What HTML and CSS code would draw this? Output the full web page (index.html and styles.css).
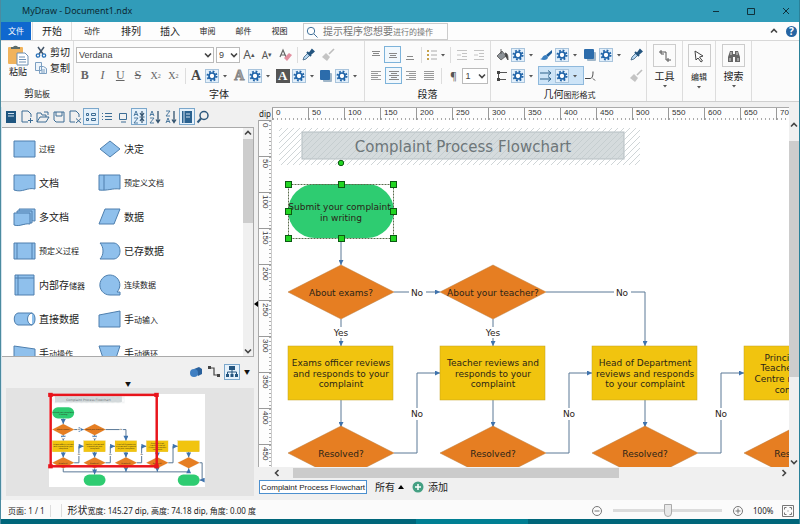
FILE: index.html
```html
<!DOCTYPE html>
<html lang="zh-CN">
<head>
    <meta charset="UTF-8">
    <meta name="viewport" content="width=device-width, initial-scale=1.0">
    <title>MyDraw - Document1.ndx</title>
    <link rel="stylesheet" href="styles.css">
</head>
<body>
    <!-- shared icons -->
    <svg class="sprite" aria-hidden="true">
        <symbol id="i-gear" viewBox="0 0 14 14">
            <rect x=".5" y=".5" width="13" height="13" fill="#e3f0fb" stroke="#a9c4dc"/>
            <circle cx="7" cy="7" r="4.5" fill="none" stroke="#1f63a8" stroke-width="2" stroke-dasharray="1.77 1.77"/>
            <circle cx="7" cy="7" r="3" fill="#fff" stroke="#1f63a8" stroke-width="1.7"/>
        </symbol>
        <symbol id="i-drop" viewBox="0 0 8 14"><path d="M2 6h4l-2 2.5z" fill="#555"/></symbol>
        <symbol id="i-layers" viewBox="0 0 14 14">
            <rect x="4" y="4" width="9" height="9" rx="1" fill="#9fb6c9"/>
            <rect x="1" y="1" width="10" height="10" rx="1" fill="#2c6cab"/>
        </symbol>
        <symbol id="i-dropper" viewBox="0 0 14 14">
            <path d="M2 12l1-3 4-4 2 2-4 4z" fill="#b8d8f2" stroke="#3b5f80" stroke-width=".8"/>
            <path d="M6 4l4 4M8 6l3-4 1.5 1.5L9 6.500z" stroke="#24557f" stroke-width="2" fill="#24557f"/>
        </symbol>
        <symbol id="i-painter" viewBox="0 0 14 14">
            <path d="M13 1L8 6" stroke="#bdbdbd" stroke-width="1.6"/>
            <path d="M5 5l4 4-3 4-5-4z" fill="#c4c4c4"/>
        </symbol>
        <symbol id="i-brush" viewBox="0 0 14 14">
            <path d="M13 2L7 7l2 2 4-4z" fill="#1d5e9c"/>
            <path d="M1 11c3 0 2-4 6-4l2 2c0 3-4 4-8 2z" fill="#3a7fc0"/>
        </symbol>
        <symbol id="i-bucket" viewBox="0 0 14 14">
            <path d="M2 8l5-5 4 5-5 4z" fill="#8c9297" stroke="#555" stroke-width=".8"/>
            <path d="M6 1v5M10 5c3 0 3 4 3 7l-2-3z" stroke="#444" fill="#444" stroke-width=".8"/>
        </symbol>
        <symbol id="i-line" viewBox="0 0 14 14">
            <path d="M3 3.500h9M3 10.500h8M3.500 3v8" stroke="#555" fill="none"/>
            <path d="M2 2h3v3H2zM2 9h3v3H2z" fill="#444"/>
        </symbol>
        <symbol id="i-arrows" viewBox="0 0 14 14">
            <path d="M1 4h10M1 10h10M9 1.500L12 4 9 6.500M9 7.500L12 10l-3 2.500" stroke="#2d6189" fill="none"/>
        </symbol>
        <symbol id="i-corner" viewBox="0 0 14 14">
            <path d="M2 9.500h5c2 0 3-2 3-7M10 9.500l2 2" stroke="#444" fill="none"/>
        </symbol>
        <symbol id="i-top" viewBox="0 0 14 14"><path d="M3 3.500h8M4 5.500h6M3 7.500h8" stroke="#888"/></symbol>
        <symbol id="i-mid" viewBox="0 0 14 14"><path d="M3 5.500h8M4 7.500h6M3 9.500h8" stroke="#888"/></symbol>
        <symbol id="i-bot" viewBox="0 0 14 14"><path d="M4 8.500h6M3 11.500h8" stroke="#888"/></symbol>
        <symbol id="i-left" viewBox="0 0 14 14"><path d="M2 2.500h10M2 4.500h7M2 6.500h10M2 8.500h7M2 10.500h10" stroke="#999"/></symbol>
        <symbol id="i-center" viewBox="0 0 14 14"><path d="M2 2.500h10M4 4.500h6M2 6.500h10M4 8.500h6M2 10.500h10" stroke="#888"/></symbol>
        <symbol id="i-right" viewBox="0 0 14 14"><path d="M2 2.500h10M5 4.500h7M2 6.500h10M5 8.500h7M2 10.500h10" stroke="#999"/></symbol>
        <symbol id="i-just" viewBox="0 0 14 14"><path d="M2 2.500h10M2 4.500h10M2 6.500h10M2 8.500h10M2 10.500h10" stroke="#999"/></symbol>
        <symbol id="i-bullets" viewBox="0 0 14 14">
            <path d="M2 3h2M2 7h2M2 11h2" stroke="#c5a14a" stroke-width="2"/>
            <path d="M6 3h6M6 7h6M6 11h6" stroke="#aaa"/>
        </symbol>
        <symbol id="i-indent" viewBox="0 0 14 14"><path d="M2 2.500h10M7 5.500h5M7 8.500h5M2 11.500h10M2 7h4" stroke="#c4c4c4"/></symbol>
        <symbol id="i-up" viewBox="0 0 10 10"><path d="M2 6.500L5 3.500l3 3" stroke="#444" stroke-width="1.600" fill="none"/></symbol>
        <symbol id="i-down" viewBox="0 0 10 10"><path d="M2 3.500L5 6.500l3-3" stroke="#444" stroke-width="1.600" fill="none"/></symbol>
        <symbol id="i-prev" viewBox="0 0 10 10"><path d="M6.500 2L3.500 5l3 3" stroke="#444" stroke-width="1.600" fill="none"/></symbol>
        <symbol id="i-next" viewBox="0 0 10 10"><path d="M3.500 2L6.500 5l-3 3" stroke="#444" stroke-width="1.600" fill="none"/></symbol>
        <symbol id="i-sort" viewBox="0 0 14 14">
            <path d="M2 6l2-5 2 5M2.500 4.500h3M2 8h4l-4 5h4" stroke="#3f6f99" fill="none" stroke-width=".9"/>
            <path d="M10 1v11M8 9.500l2 3 2-3" stroke="#33536f" fill="none" stroke-width="1.300"/>
        </symbol>
        <symbol id="i-sort-both" viewBox="0 0 14 14">
            <path d="M2 6l2-5 2 5M2.500 4.500h3M2 8h4l-4 5h4" stroke="#3f6f99" fill="none" stroke-width=".9"/>
            <path d="M10 1v12M8 3l2 3 2-3M8 11l2-3 2 3M7.500 7h5" stroke="#33536f" fill="none" stroke-width="1.200"/>
        </symbol>
        <symbol id="i-sort-desc" viewBox="0 0 14 14">
            <path d="M2 1h4L2 6h4M2 13l2-5 2 5M2.500 11.500h3" stroke="#3f6f99" fill="none" stroke-width=".9"/>
            <path d="M10 1v11M8 9.500l2 3 2-3" stroke="#33536f" fill="none" stroke-width="1.300"/>
        </symbol>
    </svg>

    <div class="app">
        <header class="titlebar">
            <span class="title">MyDraw - Document1.ndx</span>
            <div class="window-buttons">
                <button aria-label="最小化"><svg viewBox="0 0 10 10"><path d="M2 5.500h6"/></svg></button>
                <button aria-label="最大化"><svg viewBox="0 0 10 10"><path d="M1.500 2.500h7v6h-7z"/></svg></button>
                <button aria-label="关闭"><svg viewBox="0 0 10 10"><path d="M2 2l6 6M8 2L2 8"/></svg></button>
            </div>
        </header>

        <nav class="tabs">
            <button class="file-tab"><small>文件</small></button>
            <button class="tab active">开始</button>
            <button class="tab"><small>动作</small></button>
            <button class="tab">排列</button>
            <button class="tab">插入</button>
            <button class="tab short"><small>审阅</small></button>
            <button class="tab short"><small>邮件</small></button>
            <button class="tab short"><small>视图</small></button>
            <label class="search">
                <svg viewBox="0 0 12 12" aria-label="搜索"><circle cx="5" cy="5" r="3.700"/><path d="M8 8l3.500 3.500"/></svg>
                <span>提示程序您想要<small>进行的操作</small></span>
                <input type="text">
            </label>
            <div class="help">
                <svg class="icon10"><use href="#i-up"/></svg>
                <button class="help-button">?</button>
            </div>
        </nav>

        <section class="ribbon">
            <div class="group clipboard">
                <div class="clip-body">
                    <button class="paste">
                        <svg viewBox="0 0 22 22">
                            <rect x="1" y="3" width="15" height="17" rx="1" fill="#f0b35c"/>
                            <path d="M4 5V3h2a3 3 0 0 1 5 0h2v2z" fill="#5d6c6b"/>
                            <path d="M10 9h8l3 3v9H10z" fill="#fff" stroke="#6d90b4"/>
                            <path d="M12 13h6M12 15.500h7M12 18h7" stroke="#6d90b4"/>
                        </svg>
                        <span class="mid-text">粘贴</span>
                    </button>
                    <div class="clip-list">
                        <button>
                            <svg viewBox="0 0 12 12"><path d="M3 1l5 7M9 1L4 8" stroke="#44566a" stroke-width="1.500"/><circle cx="3" cy="9.500" r="1.700" fill="none" stroke="#2b73b9" stroke-width="1.300"/><circle cx="9" cy="9.500" r="1.700" fill="none" stroke="#2b73b9" stroke-width="1.300"/></svg>
                            剪切
                        </button>
                        <button>
                            <svg viewBox="0 0 12 12"><path d="M.5.5h6v8h-6zM4.500 4.500h4l3 2v5h-7z" fill="#eef5fb" stroke="#7c9fc1"/><path d="M6 8h4M6 10h4" stroke="#7c9fc1"/></svg>
                            复制
                        </button>
                    </div>
                </div>
                <div class="group-name">剪<small>贴板</small></div>
            </div>

            <div class="group font">
                <div class="row">
                    <span class="select font-family"><select aria-label="字体"><option>Verdana</option></select><svg class="icon10"><use href="#i-down"/></svg></span>
                    <span class="select font-size"><select aria-label="字号"><option>9</option></select><svg class="icon10"><use href="#i-down"/></svg></span>
                    <button class="glyph">A<sup>▴</sup></button>
                    <button class="glyph small">A<sup>▾</sup></button>
                    <button class="glyph"><svg class="icon" viewBox="0 0 14 14"><path d="M2 9l3-7 3 7M3 7h4" stroke="#666" fill="none" stroke-width="1.200"/><path d="M6 10l5-5 3 2-5 6z" fill="#e28fa0"/></svg></button>
                    <i class="sep"></i>
                    <button><svg class="icon"><use href="#i-dropper"/></svg></button>
                    <button class="push"><svg class="icon"><use href="#i-painter"/></svg></button>
                </div>
                <div class="row">
                    <button class="letter"><b>B</b></button>
                    <button class="letter"><em>I</em></button>
                    <button class="letter"><u>U</u></button>
                    <button class="letter"><s>S</s></button>
                    <button class="letter script">X<sub>2</sub></button>
                    <button class="letter script">X<sup>2</sup></button>
                    <i class="sep"></i>
                    <button class="combo"><span class="big-a">A</span><svg class="icon"><use href="#i-gear"/></svg><svg class="drop"><use href="#i-drop"/></svg></button>
                    <button class="combo"><span class="big-a hollow">A</span><svg class="icon"><use href="#i-gear"/></svg><svg class="drop"><use href="#i-drop"/></svg></button>
                    <button class="combo"><span class="big-a boxed">A</span><svg class="icon"><use href="#i-gear"/></svg><svg class="drop"><use href="#i-drop"/></svg></button>
                    <button class="combo"><svg class="icon"><use href="#i-layers"/></svg><svg class="icon"><use href="#i-gear"/></svg><svg class="drop"><use href="#i-drop"/></svg></button>
                </div>
                <div class="group-name">字体</div>
            </div>

            <div class="group paragraph">
                <div class="row">
                    <button class="tool"><svg class="icon"><use href="#i-top"/></svg></button>
                    <button class="tool on"><svg class="icon"><use href="#i-mid"/></svg></button>
                    <button class="tool"><svg class="icon"><use href="#i-bot"/></svg></button>
                    <i class="sep"></i>
                    <button><svg class="icon"><use href="#i-bullets"/></svg><svg class="drop"><use href="#i-drop"/></svg></button>
                    <i class="sep"></i>
                    <button class="tool"><svg class="icon"><use href="#i-indent"/></svg></button>
                    <button class="tool"><svg class="icon"><use href="#i-indent"/></svg></button>
                </div>
                <div class="row">
                    <button class="tool"><svg class="icon"><use href="#i-left"/></svg></button>
                    <button class="tool on"><svg class="icon"><use href="#i-center"/></svg></button>
                    <button class="tool"><svg class="icon"><use href="#i-right"/></svg></button>
                    <button class="tool"><svg class="icon"><use href="#i-just"/></svg></button>
                    <i class="sep"></i>
                    <button class="tool pilcrow">¶</button>
                    <span class="select spacing"><select aria-label="行距"><option>1</option></select><svg class="icon10"><use href="#i-down"/></svg></span>
                </div>
                <div class="group-name">段落</div>
            </div>

            <div class="group geometry">
                <div class="row">
                    <button class="combo"><svg class="icon"><use href="#i-bucket"/></svg><svg class="icon"><use href="#i-gear"/></svg><svg class="drop"><use href="#i-drop"/></svg></button>
                    <button class="combo"><svg class="icon"><use href="#i-brush"/></svg><svg class="icon"><use href="#i-gear"/></svg><svg class="drop"><use href="#i-drop"/></svg></button>
                    <button class="combo"><svg class="icon"><use href="#i-layers"/></svg><svg class="icon"><use href="#i-gear"/></svg><svg class="drop"><use href="#i-drop"/></svg></button>
                    <button class="last"><svg class="icon"><use href="#i-dropper"/></svg></button>
                </div>
                <div class="row">
                    <button class="combo"><svg class="icon"><use href="#i-line"/></svg><svg class="icon"><use href="#i-gear"/></svg><svg class="drop"><use href="#i-drop"/></svg></button>
                    <button class="combo on"><svg class="icon"><use href="#i-arrows"/></svg><svg class="icon"><use href="#i-gear"/></svg><svg class="drop"><use href="#i-drop"/></svg></button>
                    <button class="combo"><svg class="icon"><use href="#i-corner"/></svg></button>
                    <button class="last"><svg class="icon"><use href="#i-painter"/></svg></button>
                </div>
                <div class="group-name">几何<small>图形格式</small></div>
            </div>

            <button class="menu-group">
                <span class="frame"><svg viewBox="0 0 14 14"><path d="M1 3h7v8h5M3 1v4M10 9v4M3 5h3" stroke="#555" fill="none"/></svg></span>
                <span>工具</span>
                <svg class="drop"><use href="#i-drop"/></svg>
            </button>
            <button class="menu-group narrow">
                <span class="frame"><svg viewBox="0 0 14 14"><path d="M3 2l8 5-3.500 1 3 4-1.500 1-3-4-2 2z" stroke="#444" fill="#fff"/></svg></span>
                <span><small>编辑</small></span>
                <svg class="drop"><use href="#i-drop"/></svg>
            </button>
            <button class="menu-group">
                <span class="frame"><svg viewBox="0 0 14 14"><path d="M3 2h3v3h2V2h3l2 6v5H8V8H6v5H1V8z" fill="#666"/><path d="M3 9v3M11 9v3M4 3v3M10 3v3" stroke="#ddd"/></svg></span>
                <span>搜索</span>
                <svg class="drop"><use href="#i-drop"/></svg>
            </button>
        </section>

        <main class="workspace">
            <aside class="sidebar">
                <div class="library-tools">
                    <button><svg class="icon" viewBox="0 0 14 14"><path d="M2 1h10v12H2z" fill="#1f5680"/><path d="M4 3.500h6M4 6h6" stroke="#cfe0ee"/></svg></button>
                    <button><svg class="icon line" viewBox="0 0 14 14"><path d="M8 12H2V1h6l3 3v3M10.500 8v5M8 10.500h5"/></svg></button>
                    <button><svg class="icon line" viewBox="0 0 14 14"><path d="M1 12V3h4l1 2h4v2M1 12l3-5h9l-3 5zM8 2h4v3"/></svg></button>
                    <button><svg class="icon line" viewBox="0 0 14 14"><path d="M2 2h10v10H4l-2-2zM4 2v4h6V2"/></svg></button>
                    <button><svg class="icon line" viewBox="0 0 14 14"><path d="M7 12H2V1h6l3 3v3M8 8.500l5 4.500M13 8.500L8 13"/></svg></button>
                    <button class="on"><svg class="icon line" viewBox="0 0 14 14"><path d="M2.500 3.500h2v2h-2zM2.500 8.500h2v2h-2zM7.500 3.500h4v2h-4zM7.500 8.500h4v2h-4z"/></svg></button>
                    <button><svg class="icon line" viewBox="0 0 14 14"><path d="M2 3.500h1M5 3.500h7M2 6.500h1M5 6.500h7M2 9.500h1M5 9.500h7"/></svg></button>
                    <button><svg class="icon line" viewBox="0 0 14 14"><path d="M3.500 3.500h7v6h-7zM5 12h5"/></svg></button>
                    <button class="on"><svg class="icon"><use href="#i-sort-both"/></svg></button>
                    <button><svg class="icon"><use href="#i-sort"/></svg></button>
                    <button><svg class="icon"><use href="#i-sort-desc"/></svg></button>
                    <button class="on"><svg class="icon" viewBox="0 0 14 14"><path d="M2 1h10v12H2z" fill="#2a618f"/><path d="M4 1v12M6 4h4M6 7h4" stroke="#cfe0ee"/></svg></button>
                    <button><svg class="icon" viewBox="0 0 14 14"><circle cx="8" cy="5.500" r="4" fill="none" stroke="#2d587d" stroke-width="1.500"/><path d="M5 8.500L1.500 12.500" stroke="#2d587d" stroke-width="2"/></svg></button>
                </div>

                <div class="library">
                    <ul class="shapes">
                        <li><svg viewBox="0 0 24 24"><path d="M1 4h21v16H1z"/></svg><small>过程</small></li>
                        <li><svg viewBox="0 0 24 24"><path d="M12 4l10 8-10 8L2 12z"/></svg>决定</li>
                        <li><svg viewBox="0 0 24 24"><path d="M1 4h21v14c-8-2-12 4-21 1z"/></svg>文档</li>
                        <li><svg viewBox="0 0 24 24"><path d="M1 4h21v14c-8-1-12 2-21 1zM6 4v15"/></svg><small>预定义文档</small></li>
                        <li><svg viewBox="0 0 24 24"><path d="M6 4h16v12c-6-1-10 3-16 1z"/><path d="M4 6h15v12c-6-1-9 3-15 1z"/><path d="M1 8h16v11c-6-1-10 3-16 1z"/></svg>多文档</li>
                        <li><svg viewBox="0 0 24 24"><path d="M7 4h15l-6 15H1z"/></svg>数据</li>
                        <li><svg viewBox="0 0 24 24"><path d="M1 4h21v16H1zM4 4v16M19 4v16"/></svg><small>预定义过程</small></li>
                        <li><svg viewBox="0 0 24 24"><path d="M2 4h14c8 1 8 15 0 16H2c4-4 4-12 0-16z"/></svg>已存数据</li>
                        <li><svg viewBox="0 0 24 24"><path d="M2 2h19v20H2zM5 2v20M2 5h19"/></svg><span>内部存<small>储器</small></span></li>
                        <li><svg viewBox="0 0 24 24"><path d="M12 22a10 10 0 1 1 7-3h3v3z"/></svg><small>连续数据</small></li>
                        <li><svg viewBox="0 0 24 24"><path d="M5 6h14c4 1 4 11 0 12H5C0 17 0 7 5 6zM19 6c-6 1-6 11 0 12"/></svg>直接数据</li>
                        <li><svg viewBox="0 0 24 24"><path d="M1 8l21-4v16H1z"/></svg><span>手<small>动输入</small></span></li>
                        <li><svg viewBox="0 0 24 24"><path d="M1 5l21 3v12H1z"/></svg><span>手<small>动操作</small></span></li>
                        <li><svg viewBox="0 0 24 24"><path d="M1 5h21l-5 15H6z"/></svg><span>手<small>动循环</small></span></li>
                    </ul>
                    <div class="scroll-v library-scroll">
                        <svg class="icon10"><use href="#i-up"/></svg>
                        <div class="thumb"></div>
                        <svg class="icon10"><use href="#i-down"/></svg>
                    </div>
                </div>

                <div class="overview-tools">
                    <button><svg class="icon" viewBox="0 0 14 14"><path d="M5 4l5-2 3 2v5l-4 2z" fill="#29609b"/><circle cx="5" cy="8" r="4" fill="#3f7fc2"/></svg></button>
                    <button><svg class="icon" viewBox="0 0 14 14"><path d="M2 3h5v7h6" stroke="#444" fill="none" stroke-width="1.200"/><path d="M1 1h3v3H1zM10 9h3v3h-3z" fill="#444"/></svg></button>
                    <button class="on"><svg class="icon" viewBox="0 0 14 14"><path d="M4 1h6v4H4zM1 9h3v3H1zM5.500 9h3v3h-3zM10 9h3v3h-3z" fill="#24557f"/><path d="M7 5v4M2.500 9V7h9v2" stroke="#24557f" fill="none"/></svg></button>
                    <span class="caret">▼</span>
                </div>
                <div class="overview-caret">▼</div>
                <div class="overview">
                    <svg class="overview-page" viewBox="0 0 756 450">
                        <use href="#diagram"/>
                        <rect x="8" y="4" width="514" height="346" fill="none" stroke="#e8141c" stroke-width="12"/>
                        <g fill="#e8141c">
                            <rect width="22" height="20" x="-4" y="-6"/>
                            <rect width="22" height="20" x="510" y="-6"/>
                            <rect width="22" height="20" x="-4" y="340"/>
                            <rect width="22" height="20" x="510" y="340"/>
                        </g>
                    </svg>
                </div>
            </aside>

            <div class="splitter"><svg viewBox="0 0 4 6"><path d="M4 0v6L0 3z"/></svg></div>

            <section class="editor">
                <div class="unit">dip</div>
                <div class="ruler-x">
                    <span>0</span><span>50</span><span>100</span><span>150</span><span>200</span><span>250</span><span>300</span><span>350</span><span>400</span><span>450</span><span>500</span><span>550</span><span>600</span><span>650</span><span>700</span>
                </div>
                <div class="ruler-y">
                    <span>0</span><span>50</span><span>100</span><span>150</span><span>200</span><span>250</span><span>300</span><span>350</span><span>400</span><span>450</span>
                </div>
                <svg class="canvas">
                    <defs>
                        <pattern id="hatch" width="6" height="6" patternUnits="userSpaceOnUse">
                            <path d="M-1 1l2-2M0 6l6-6M5 7l2-2" stroke="#c3cacd" stroke-width=".8"/>
                        </pattern>
                        <marker id="arrow" viewBox="0 0 6 6" refX="6" refY="3" markerWidth="6" markerHeight="5" orient="auto">
                            <path d="M0 0l6 3-6 3z" fill="#3f73ad"/>
                        </marker>
                    </defs>
                    <g id="diagram">
                        <rect class="title-box" x="30" y="12" width="322" height="27"/>
                        <rect x="7" y="8" width="361" height="37" fill="url(#hatch)"/>
                        <text class="title-text" x="191" y="32">Complaint Process Flowchart</text>

                        <g class="links">
                            <path d="M69 118v27"/>
                            <path d="M122 172h46"/>
                            <path d="M69 199v27"/>
                            <path d="M221 199v27"/>
                            <path d="M274 172h99v54"/>
                            <path d="M69 280v27"/>
                            <path d="M221 280v27"/>
                            <path d="M373 280v27"/>
                            <path d="M525 280v27"/>
                            <path d="M677 280v27"/>
                            <path d="M122 333h23v-80h23"/>
                            <path d="M274 333h23v-80h23"/>
                            <path d="M426 333h23v-80h23"/>
                            <path d="M578 333h23v-80h23"/>
                            <path d="M69 360v17h608v-17"/>
                            <path d="M221 360v30"/>
                            <path d="M373 360v17"/>
                            <path d="M525 360v17"/>
                            <path d="M730 333h12v84h-12"/>
                        </g>

                        <rect class="start" x="16" y="64" width="106" height="54" rx="27"/>
                        <rect class="start" x="168" y="390" width="106" height="54" rx="27"/>
                        <rect class="start" x="624" y="390" width="106" height="54" rx="27"/>
                        <g class="decision">
                            <path d="M69 145l53 27-53 27-53-27z"/>
                            <path d="M221 145l53 27-53 27-53-27z"/>
                            <path d="M69 306l53 27-53 27-53-27z"/>
                            <path d="M221 306l53 27-53 27-53-27z"/>
                            <path d="M373 306l53 27-53 27-53-27z"/>
                            <path d="M525 306l53 27-53 27-53-27z"/>
                            <path d="M677 306l53 27-53 27-53-27z"/>
                        </g>
                        <g class="process">
                            <rect x="16" y="226" width="105" height="54"/>
                            <rect x="168" y="226" width="105" height="54"/>
                            <rect x="320" y="226" width="105" height="54"/>
                            <rect x="472" y="226" width="105" height="54"/>
                            <rect x="624" y="226" width="105" height="54"/>
                        </g>
                        <g class="gaps">
                            <rect x="137" y="166" width="17" height="12"/>
                            <rect x="342" y="166" width="17" height="12"/>
                            <rect x="60" y="207" width="18" height="11"/>
                            <rect x="212" y="207" width="18" height="11"/>
                            <rect x="137" y="288" width="17" height="12"/>
                            <rect x="289" y="288" width="17" height="12"/>
                            <rect x="441" y="288" width="17" height="12"/>
                        </g>

                        <g class="labels">
                            <text x="69" y="90">Submit your complaint,</text>
                            <text x="69" y="101">in writing</text>
                            <text x="69" y="176">About exams?</text>
                            <text x="221" y="176">About your teacher?</text>
                            <text x="145" y="176">No</text>
                            <text x="350" y="176">No</text>
                            <text x="69" y="216">Yes</text>
                            <text x="221" y="216">Yes</text>
                            <text x="69" y="246">Exams officer reviews</text>
                            <text x="69" y="257">and responds to your</text>
                            <text x="69" y="267">complaint</text>
                            <text x="221" y="246">Teacher reviews and</text>
                            <text x="221" y="257">responds to your</text>
                            <text x="221" y="267">complaint</text>
                            <text x="373" y="246">Head of Department</text>
                            <text x="373" y="257">reviews and responds</text>
                            <text x="373" y="267">to your complaint</text>
                            <text x="525" y="241">Principal/Head</text>
                            <text x="525" y="251">Teacher/Head of</text>
                            <text x="525" y="262">Centre reviews the</text>
                            <text x="525" y="273">complaint</text>
                            <text x="145" y="297">No</text>
                            <text x="297" y="297">No</text>
                            <text x="449" y="297">No</text>
                            <text x="69" y="337">Resolved?</text>
                            <text x="221" y="337">Resolved?</text>
                            <text x="373" y="337">Resolved?</text>
                            <text x="525" y="337">Resolved?</text>
                        </g>
                    </g>

                    <!-- selection frame -->
                    <rect class="selection" x="16.500" y="64.500" width="105" height="54"/>
                    <g class="handles">
                        <circle cx="69" cy="43" r="2.700"/>
                        <rect x="13.500" y="61.500" width="6" height="6"/>
                        <rect x="66.500" y="61.500" width="6" height="6"/>
                        <rect x="118.500" y="61.500" width="6" height="6"/>
                        <rect x="13.500" y="88.500" width="6" height="6"/>
                        <rect x="118.500" y="88.500" width="6" height="6"/>
                        <rect x="13.500" y="115.500" width="6" height="6"/>
                        <rect x="66.500" y="115.500" width="6" height="6"/>
                        <rect x="118.500" y="115.500" width="6" height="6"/>
                    </g>
                </svg>
                <div class="scroll-v canvas-scroll">
                    <svg class="icon10"><use href="#i-up"/></svg>
                    <div class="thumb"></div>
                    <svg class="icon10"><use href="#i-down"/></svg>
                </div>
                <div class="scroll-h">
                    <svg class="icon10"><use href="#i-prev"/></svg>
                    <div class="thumb"></div>
                    <svg class="icon10"><use href="#i-next"/></svg>
                </div>
                <div class="pages">
                    <button class="page-tab">Complaint Process Flowchart</button>
                    <button class="page-all">所有 <svg viewBox="0 0 6 4"><path d="M0 4h6L3 0z"/></svg></button>
                    <button class="page-add">
                        <svg viewBox="0 0 12 12"><circle cx="6" cy="6" r="5.500" fill="#45a083"/><path d="M6 3v6M3 6h6" stroke="#fff" stroke-width="1.500"/></svg>
                        添加
                    </button>
                </div>
            </section>
        </main>

        <footer class="status">
            <span class="page-no">页面: 1 / 1</span>
            <span class="shape-info"><span class="shape-word">形状</span>宽度: 145.27 dip, 高度: 74.18 dip, 角度: 0.00 度</span>
            <div class="zoom">
                <button aria-label="缩小"><svg viewBox="0 0 12 12"><circle cx="6" cy="6" r="4.500"/><path d="M3.500 6h5"/></svg></button>
                <input type="range" aria-label="缩放" min="0" max="100" value="50">
                <button aria-label="放大"><svg viewBox="0 0 12 12"><circle cx="6" cy="6" r="4.500"/><path d="M3.500 6h5M6 3.500v5"/></svg></button>
                <span class="percent">100%</span>
                <button aria-label="适合窗口"><svg viewBox="0 0 12 12"><path d="M.5.5h11v11H.5zM2.500 4.500v-2h2M7.500 2.500h2v2M9.500 7.500v2h-2M4.500 9.500h-2v-2M5.500 6h1"/></svg></button>
            </div>
        </footer>
        <div class="taskbar"></div>
    </div>
</body>
</html>
```

FILE: styles.css
```css
* {
    box-sizing: border-box;
}
body {
    margin: 0;
    font-family: "Noto Sans", "Noto Sans CJK SC", sans-serif;
    font-size: 10px;
    line-height: 12px;
    color: #222;
    background-color: #f0f0f0;
}
small {
    font-size: 8px;
}
button {
    display: flex;
    align-items: center;
    justify-content: center;
    border: 0;
    padding: 0;
    background: none;
    color: inherit;
    font: inherit;
    white-space: nowrap;
}
svg {
    display: block;
    flex: none;
}
.sprite {
    position: absolute;
    width: 0;
    height: 0;
}
.icon {
    width: 14px;
    height: 14px;
}
.icon10 {
    width: 10px;
    height: 10px;
}
.drop {
    width: 8px;
    height: 14px;
}
.line {
    fill: none;
    stroke: #3d6d95;
}
.app {
    display: flex;
    flex-direction: column;
    height: 100vh;
    border-left: 1px solid #4b8ba0;
    border-right: 1px solid #2a8199;
}

/* title bar */
.titlebar {
    display: flex;
    align-items: center;
    justify-content: space-between;
    height: 22px;
    padding: 0 3px 0 21px;
    background-color: #319cb9;
    color: #0c2a33;
    font-size: 9px;
}
.window-buttons {
    display: flex;
    gap: 15px;
}
.window-buttons button {
    width: 20px;
    height: 20px;
}
.window-buttons svg {
    width: 10px;
    height: 10px;
    fill: none;
    stroke: #10313b;
}

/* tabs */
.tabs {
    display: flex;
    height: 19px;
    background-color: #fdfdfd;
    border-bottom: 1px solid #d8d8d8;
}
.file-tab {
    width: 30px;
    background-color: #0f68cf;
    color: #fff;
}
.tab {
    width: 36px;
    margin-right: 3px;
}
.tab.short {
    width: 33px;
}
.tab.active {
    width: 40px;
    margin: 0 2px 0 1px;
    border: 1px solid #ddd;
    border-width: 0 1px;
}
.search {
    display: flex;
    align-items: center;
    position: relative;
    width: 145px;
    height: 17px;
    margin: 1px 0 0 4px;
    padding-left: 2px;
    gap: 5px;
    border: 1px solid #ccc;
    color: #777;
    white-space: nowrap;
}
.search svg {
    width: 12px;
    height: 12px;
    fill: none;
    stroke: #41719a;
}
.search input {
    position: absolute;
    inset: 0 0 0 18px;
    width: 124px;
    border: 0;
    background: transparent;
}
.help {
    display: flex;
    align-items: center;
    gap: 7px;
    margin-left: auto;
    padding-right: 2px;
}
.help-button {
    width: 11px;
    height: 11px;
    border-radius: 50%;
    background-color: #2565a3;
    color: #fff;
    font-weight: bold;
}

/* ribbon */
.ribbon {
    display: flex;
    height: 61px;
    background-color: #fbfbfb;
    border-bottom: 1px solid #cfcfcf;
}
.group {
    display: flex;
    flex-direction: column;
    padding: 5px 2px 0;
    border-right: 1px solid #ddd;
}
.group-name {
    margin-top: auto;
    padding-bottom: 1px;
    text-align: center;
}
.row {
    display: flex;
    align-items: center;
    height: 17px;
    margin-bottom: 4px;
}
.sep {
    width: 1px;
    height: 16px;
    margin: 0 3px;
    background-color: #ddd;
}
.clipboard {
    width: 73px;
    padding-top: 3px;
}
.clip-body {
    display: flex;
    gap: 6px;
    padding-left: 4px;
}
.paste {
    flex-direction: column;
}
.paste svg {
    width: 22px;
    height: 22px;
}
.mid-text {
    font-size: 9px;
}
.clip-list button {
    gap: 3px;
    height: 16px;
}
.clip-list svg {
    width: 12px;
    height: 12px;
}
.font {
    width: 291px;
}
.select {
    position: relative;
    height: 16px;
}
.select select {
    appearance: none;
    width: 100%;
    height: 100%;
    padding: 0 2px;
    border: 1px solid #bbb;
    border-radius: 0;
    background-color: #fff;
    color: #444;
    font: 9px "Liberation Sans", sans-serif;
}
.select svg {
    position: absolute;
    right: 1px;
    top: 3px;
    pointer-events: none;
}
.font-family {
    width: 138px;
}
.font-size {
    width: 24px;
    margin-left: 2px;
}
.glyph {
    width: 18px;
    color: #555;
    font-size: 12px;
}
.glyph.small {
    font-size: 10px;
}
.glyph sup {
    font-size: 7px;
}
.push {
    margin-left: 6px;
}
.letter {
    width: 18px;
    color: #666;
    font: 12px "Liberation Serif", serif;
}
.letter.script {
    font-size: 10px;
}
.letter sub,
.letter sup {
    font-size: 6px;
}
.combo {
    justify-content: flex-start;
    width: 44px;
    height: 17px;
    gap: 2px;
}
.big-a {
    width: 14px;
    color: #444;
    font: bold 14px/14px "Liberation Serif", serif;
    text-align: center;
}
.big-a.hollow {
    color: #aaa;
    -webkit-text-stroke: 1px #888;
}
.big-a.boxed {
    background-color: #555;
    color: #fff;
    font-size: 13px;
}
.tool {
    width: 18px;
    height: 17px;
}
.paragraph .on {
    border: 1px solid #7db3da;
    background-color: #f1f8fd;
}
.paragraph {
    width: 126px;
}
.pilcrow {
    color: #555;
}
.spacing {
    width: 26px;
}
.geometry {
    width: 156px;
    padding-left: 4px;
}
.geometry .on {
    background-color: #cde4f7;
    outline: 1px solid #8fb9dc;
}
.geometry .last {
    margin-left: auto;
    padding-right: 1px;
}
.menu-group {
    flex-direction: column;
    justify-content: flex-start;
    width: 36px;
    padding-top: 3px;
    border-right: 1px solid #ddd;
}
.menu-group.narrow {
    width: 33px;
}
.frame {
    display: flex;
    align-items: center;
    justify-content: center;
    width: 23px;
    height: 23px;
    margin-bottom: 3px;
    border: 1px solid #ccc;
}
.frame svg {
    width: 14px;
    height: 14px;
}
.menu-group .drop {
    margin-top: -3px;
}

/* workspace */
.workspace {
    display: flex;
    flex: 1;
    min-height: 0;
    padding-top: 5px;
}
.sidebar {
    display: flex;
    flex-direction: column;
    width: 253px;
    border-left: 1px solid #d5e4ee;
}
.library-tools {
    display: flex;
    height: 20px;
    padding: 1px 0 2px 1px;
}
.library-tools button {
    width: 16px;
}
.library-tools .on,
.overview-tools .on {
    border: 1px solid #7ba7cb;
    background-color: #e5f1fb;
}
.library {
    display: flex;
    flex: 1;
    min-height: 0;
    border: 1px solid #aaa;
    border-left: 0;
    background-color: #fff;
}
.shapes {
    display: grid;
    grid-template-columns: 85px 1fr;
    grid-auto-rows: 34px;
    flex: 1;
    margin: 0;
    padding: 4px 0 0 11px;
    list-style: none;
    overflow: hidden;
}
.shapes li {
    display: flex;
    align-items: center;
    gap: 2px;
    white-space: nowrap;
}
.shapes svg {
    width: 24px;
    height: 24px;
    fill: #8fc0ec;
    stroke: #4e7fae;
}
.scroll-v {
    display: flex;
    flex-direction: column;
    align-items: center;
    width: 10px;
    background-color: #f0f0f0;
}
.scroll-v .thumb {
    width: 100%;
    background-color: #cdcdcd;
}
.scroll-v svg:last-child {
    margin-top: auto;
}
.library-scroll .thumb {
    height: 37%;
    margin-top: 1px;
}
.overview-tools {
    display: flex;
    justify-content: flex-end;
    align-items: center;
    gap: 2px;
    margin-top: 7px;
    padding-right: 2px;
}
.overview-tools button {
    width: 16px;
    height: 16px;
}
.caret,
.overview-caret {
    font-size: 6px;
    line-height: 8px;
    text-align: center;
    color: #111;
}
.caret {
    width: 10px;
}
.overview {
    display: flex;
    justify-content: center;
    height: 108px;
    margin: 0 0 4px 4px;
    padding: 6px 6px 0 0;
    background-color: #e3e3e3;
}
.overview-page {
    width: 156px;
    height: 93px;
    background-color: #fff;
    overflow: visible;
}
.splitter {
    display: flex;
    align-items: center;
    width: 4px;
}
.splitter svg {
    width: 4px;
    height: 6px;
}

/* editor */
.editor {
    display: grid;
    grid-template-columns: 14px 1fr 10px;
    grid-template-rows: 13px 1fr 11px 22px;
    flex: 1;
    min-width: 0;
}
.unit {
    font-size: 8px;
    line-height: 13px;
    text-align: center;
}
.ruler-x,
.ruler-y {
    display: flex;
    overflow: hidden;
    background-color: #fdfdfd;
    font: 8px/10px "Liberation Sans", sans-serif;
    color: #333;
}
.ruler-x {
    grid-column: 2;
    grid-row: 1;
    border-top: 1px solid #aaa;
}
.ruler-x span {
    flex: none;
    width: 36px;
    padding-left: 3px;
    border-left: 1px solid #999;
    background: repeating-linear-gradient(to right, #aaa 0 1px, transparent 1px 4px) bottom / 100% 2px no-repeat;
}
.ruler-y {
    grid-column: 1;
    grid-row: 2;
    min-height: 0;
    flex-direction: column;
    border-left: 1px solid #aaa;
    border-right: 1px solid #ccc;
}
.ruler-y span {
    flex: none;
    height: 36px;
    padding-top: 2px;
    border-top: 1px solid #999;
    line-height: 11px;
    writing-mode: vertical-rl;
    background: repeating-linear-gradient(to bottom, #aaa 0 1px, transparent 1px 4px) right / 2px 100% no-repeat;
}
.canvas {
    grid-column: 2;
    grid-row: 2;
    width: 100%;
    height: 100%;
    background-color: #fff;
    overflow: hidden;
}
.canvas-scroll {
    grid-column: 3;
    grid-row: 2;
}
.canvas-scroll .thumb {
    height: 68%;
    margin-top: 11px;
}
.scroll-h {
    grid-column: 2;
    grid-row: 3;
    display: flex;
    align-items: center;
    padding-top: 1px;
}
.scroll-h .thumb {
    width: 63%;
    height: 10px;
    margin-left: 11px;
    background-color: #cbcbcb;
}
.scroll-h svg:last-child {
    margin-left: auto;
}
.pages {
    grid-column: 1 / 4;
    grid-row: 4;
    display: flex;
    align-items: center;
    gap: 8px;
    padding: 0 0 4px 1px;
}
.page-tab {
    height: 14px;
    padding: 0 1px;
    border: 1px solid #4c90cf;
    background-color: #fff;
    font: 8px "Liberation Sans", sans-serif;
}
.page-all svg {
    width: 6px;
    height: 4px;
    margin-left: 3px;
}
.page-add {
    gap: 4px;
}
.page-add svg {
    width: 12px;
    height: 12px;
}

/* diagram */
.title-box {
    fill: #d5dbdd;
    stroke: #b4bdc1;
}
.title-text {
    font: 15px "DejaVu Sans", sans-serif;
    text-anchor: middle;
    fill: #6d7679;
}
.labels {
    font: 9px "DejaVu Sans", sans-serif;
    text-anchor: middle;
    fill: #2b2417;
}
.links > path {
    fill: none;
    stroke: #5a7896;
    vector-effect: non-scaling-stroke;
    marker-end: url(#arrow);
}
.start {
    fill: #2ecc71;
}
.decision {
    fill: #e67e22;
    stroke: #b97a3c;
    stroke-width: .5;
}
.process {
    fill: #f1c40f;
    stroke: #c2a11c;
    stroke-width: .5;
}
.gaps {
    fill: #fff;
}
.selection {
    fill: none;
    stroke: #5b6b4c;
    stroke-dasharray: 2 1;
}
.handles {
    fill: #22d522;
    stroke: #0b5a13;
}

/* status bar */
.status {
    display: flex;
    align-items: center;
    height: 19px;
    padding: 2px 5px 0 7px;
    background-color: #fbfbfb;
    font-size: 8px;
    white-space: nowrap;
}
.page-no {
    padding-right: 5px;
    border-right: 1px solid #ddd;
}
.shape-info {
    margin-left: 10px;
    padding-left: 6px;
    border-left: 1px solid #ddd;
}
.shape-word {
    font-size: 10px;
}
.zoom {
    display: flex;
    align-items: center;
    margin-left: auto;
}
.zoom svg {
    width: 12px;
    height: 12px;
    fill: none;
    stroke: #777;
}
.zoom input {
    appearance: none;
    width: 109px;
    height: 14px;
    margin: 0 10px;
    background: linear-gradient(#dcdcdc, #dcdcdc) center / 100% 3px no-repeat;
}
.zoom input::-webkit-slider-thumb {
    appearance: none;
    width: 8px;
    height: 13px;
    border: 1px solid #aaa;
    border-radius: 0 0 4px 4px;
    background-color: #e8e8e8;
}
.percent {
    width: 25px;
    margin: 0 4px 0 9px;
}
.taskbar {
    height: 5px;
    background: linear-gradient(to right, #00667a 52%, #007f93 52% 66%, #00667a 66%);
}
```
